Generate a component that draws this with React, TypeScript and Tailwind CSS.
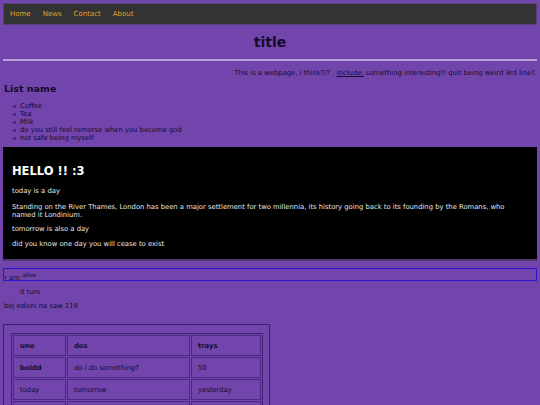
import React from "react";

const items = [
  "Coffee",
  "Tea",
  "Milk",
  "do you still feel remorse when you become god",
  "not safe being myself",
];

export default function App() {
  const font = { fontFamily: '"DejaVu Sans", Verdana, sans-serif' };
  return (
    <div className="min-h-[405px] w-[540px] bg-[#7145ab] text-[#160a2c] text-[6.8px] leading-[8px] overflow-hidden" style={font}>
      <div className="pt-[3px] px-[3px]">
        <nav className="h-[22px] bg-[#333333] border border-[#55407a] flex items-center gap-[12px] pl-[6px] text-[#e0a126] text-[7px]">
          <span>Home</span>
          <span>News</span>
          <span>Contact</span>
          <span>About</span>
        </nav>
        <h1 className="text-center font-bold text-[14px] leading-[18px] mt-[8px]">title</h1>
        <div className="h-[2px] bg-[#b89fdc] mt-[8px]" />
        <p className="text-right mt-[8px]">
          This is a webpage, i think?/? . <span className="underline">Include:</span> something interesting!! quit being weird 3rd line?.
        </p>
        <h2 className="font-bold text-[9.5px] leading-[12px] mt-[6px] pl-[1px]">List name</h2>
        <ul className="mt-[7px] pl-[10px]">
          {items.map((t) => (
            <li key={t} className="flex items-center">
              <span className="w-[3px] h-[3px] rounded-full border-[0.8px] border-[#2a1850] mr-[4px] shrink-0" />
              <span>{t}</span>
            </li>
          ))}
        </ul>
        <div className="mt-[5px] bg-black text-[#e8e8e8] h-[114px] border-b-[2px] border-[#4d3a68] px-[9px] pt-[17px]">
          <h3 className="font-bold text-[11.5px] leading-[14px] text-white">HELLO !! :3</h3>
          <p className="mt-[9px]">today is a day</p>
          <p className="mt-[8px]">
            Standing on the River Thames, London has been a major settlement for two millennia, its history going back to its founding by the Romans, who named it Londinium.
          </p>
          <p className="mt-[6px]">tomorrow is also a day</p>
          <p className="mt-[7px]">did you know one day you will cease to exist</p>
        </div>
        <div className="mt-[7px] h-[13px] border-[1.5px] border-[#2a18d0] relative pl-[5px] leading-[11px]">
          <span className="absolute left-[1px] bottom-[1px] w-[1px] h-[3px] bg-[#2a1a50]" />
          <span className="[vertical-align:-1px]">am</span>{" "}
          <span className="text-[6px] [vertical-align:2px]">alive</span>
        </div>
        <p className="mt-[7px] pl-[17px]">it ture</p>
        <p className="mt-[6px] pl-[1px]">boj edisni na saw 119</p>
        <div className="mt-[14px] w-[267px] border border-[#3c2170] px-[7px] pt-[8px] pb-[8px]">
          <table className="w-[252px] border-separate border-spacing-[1px] border border-[#3c2170]">
            <tbody>
              <tr className="h-[21px]">
                <td className="w-[53px] border border-[#4a2a82] pl-[6px] font-bold">uno</td>
                <td className="w-[123px] border border-[#4a2a82] pl-[6px] font-bold">dos</td>
                <td className="border border-[#4a2a82] pl-[6px] font-bold">trays</td>
              </tr>
              <tr className="h-[21px]">
                <td className="border border-[#4a2a82] pl-[6px] font-bold">boldd</td>
                <td className="border border-[#4a2a82] pl-[6px] italic">do i do something?</td>
                <td className="border border-[#4a2a82] pl-[6px]">50</td>
              </tr>
              <tr className="h-[21px]">
                <td className="border border-[#4a2a82] pl-[6px]">today</td>
                <td className="border border-[#4a2a82] pl-[6px]">tomorrow</td>
                <td className="border border-[#4a2a82] pl-[6px]">yesterday</td>
              </tr>
              <tr className="h-[21px]">
                <td className="border border-[#4a2a82] pl-[6px]"></td>
                <td className="border border-[#4a2a82] pl-[6px]"></td>
                <td className="border border-[#4a2a82] pl-[6px]"></td>
              </tr>
            </tbody>
          </table>
        </div>
      </div>
    </div>
  );
}
